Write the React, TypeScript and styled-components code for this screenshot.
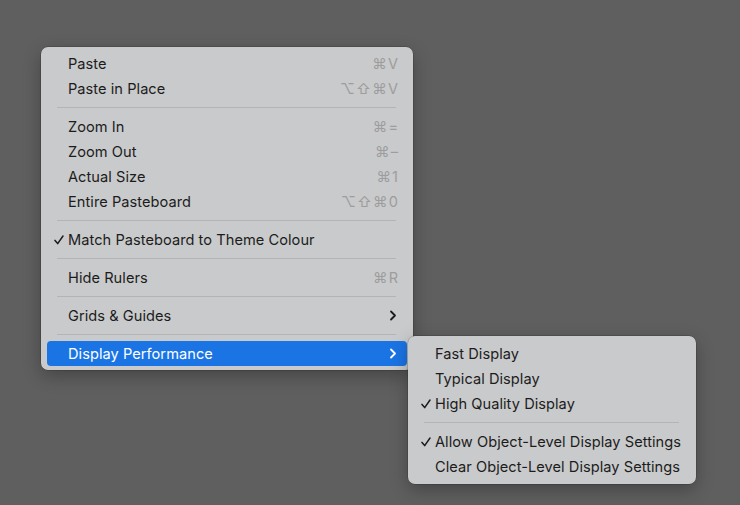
import React from 'react'
import styled, {createGlobalStyle} from 'styled-components'

const GlobalStyle = createGlobalStyle`
    html, body {
        margin: 0;
        padding: 0;
        background: #5f5f5f;
    }
    body {
        font-family: "Inter", "Liberation Sans", sans-serif;
        -webkit-font-smoothing: antialiased;
    }
`

const Desktop = styled.div`
    position: relative;
    width: 740px;
    height: 505px;
    background: #5f5f5f;
    overflow: hidden;
`

const Menu = styled.div<{$width: number}>`
    width: ${(p) => p.$width}px;
    box-sizing: border-box;
    padding: 4px 6px;
    background: #c9cacb;
    border-radius: 7px;
    box-shadow: 0 0 0 0.5px rgba(0, 0, 0, 0.25), 0 6px 18px rgba(0, 0, 0, 0.28);
    display: flex;
    flex-direction: column;
`

const MainMenu = styled(Menu)`
    position: absolute;
    left: 41px;
    top: 47px;
`

const SubMenu = styled(Menu)`
    position: absolute;
    left: calc(100% + 1px);
    top: -5px;
    padding: 5px 6px;
    z-index: 2;
`

const Row = styled.div<{$active?: boolean}>`
    position: relative;
    height: 25px;
    display: grid;
    grid-template-columns: 21px 1fr auto;
    align-items: center;
    padding-right: 9px;
    border-radius: 4px;
    font-size: 14.6px;
    letter-spacing: 0.05px;
    color: ${(p) => (p.$active ? '#ffffff' : '#1c1c1c')};
    background: ${(p) => (p.$active ? '#1b74e4' : 'transparent')};
`

const CheckCell = styled.span`
    display: flex;
    align-items: center;
    justify-content: flex-end;
    padding-right: 4px;
`

const Label = styled.span`
    white-space: nowrap;
`

const Shortcut = styled.span`
    font-family: "Inter", "DejaVu Sans", sans-serif;
    font-size: 14.5px;
    color: #9c9d9e;
    letter-spacing: 1.2px;
    margin-right: -1.2px;
    white-space: nowrap;
`

const Chevron = styled.svg`
    display: block;
    margin-right: 1px;
`

const Separator = styled.div`
    height: 13px;
    display: flex;
    align-items: center;
    padding: 0 11px 0 10px;

    &::after {
        content: '';
        flex: 1;
        height: 1px;
        background: #b3b4b5;
    }
`

const Check = () => (
    <svg width="10" height="10" viewBox="0 0 10 10">
        <path d="M1 5.4 L3.7 8.6 L9 1" fill="none" stroke="#1c1c1c" strokeWidth="1.5" strokeLinecap="round" strokeLinejoin="round" />
    </svg>
)

const Arrow: React.FC<{color: string}> = ({color}) => (
    <Chevron width="8" height="11" viewBox="0 0 8 11">
        <path d="M2 1.5 L6 5.5 L2 9.5" fill="none" stroke={color} strokeWidth="1.8" strokeLinecap="round" strokeLinejoin="round" />
    </Chevron>
)

type Item = {label: string; shortcut?: string; checked?: boolean; submenu?: boolean; active?: boolean} | 'sep'

const mainItems: Item[] = [
    {label: 'Paste', shortcut: '⌘V'},
    {label: 'Paste in Place', shortcut: '⌥⇧⌘V'},
    'sep',
    {label: 'Zoom In', shortcut: '⌘='},
    {label: 'Zoom Out', shortcut: '⌘–'},
    {label: 'Actual Size', shortcut: '⌘1'},
    {label: 'Entire Pasteboard', shortcut: '⌥⇧⌘0'},
    'sep',
    {label: 'Match Pasteboard to Theme Colour', checked: true},
    'sep',
    {label: 'Hide Rulers', shortcut: '⌘R'},
    'sep',
    {label: 'Grids & Guides', submenu: true},
    'sep',
    {label: 'Display Performance', submenu: true, active: true},
]

const subItems: Item[] = [
    {label: 'Fast Display'},
    {label: 'Typical Display'},
    {label: 'High Quality Display', checked: true},
    'sep',
    {label: 'Allow Object-Level Display Settings', checked: true},
    {label: 'Clear Object-Level Display Settings'},
]

const MenuRow: React.FC<{item: Exclude<Item, 'sep'>; children?: React.ReactNode}> = ({item, children}) => (
    <Row $active={item.active}>
        <CheckCell>{item.checked && <Check />}</CheckCell>
        <Label>{item.label}</Label>
        {item.shortcut && <Shortcut>{item.shortcut}</Shortcut>}
        {item.submenu && <Arrow color={item.active ? '#ffffff' : '#1c1c1c'} />}
        {children}
    </Row>
)

const renderItems = (items: Item[], sub?: React.ReactNode) =>
    items.map((item, i) =>
        item === 'sep' ? (
            <Separator key={i} />
        ) : (
            <MenuRow key={i} item={item}>
                {item.active && sub}
            </MenuRow>
        )
    )

export default function App() {
    const sub = <SubMenu $width={288}>{renderItems(subItems)}</SubMenu>
    return (
        <>
            <GlobalStyle />
            <Desktop>
                <MainMenu $width={372}>{renderItems(mainItems, sub)}</MainMenu>
            </Desktop>
        </>
    )
}
